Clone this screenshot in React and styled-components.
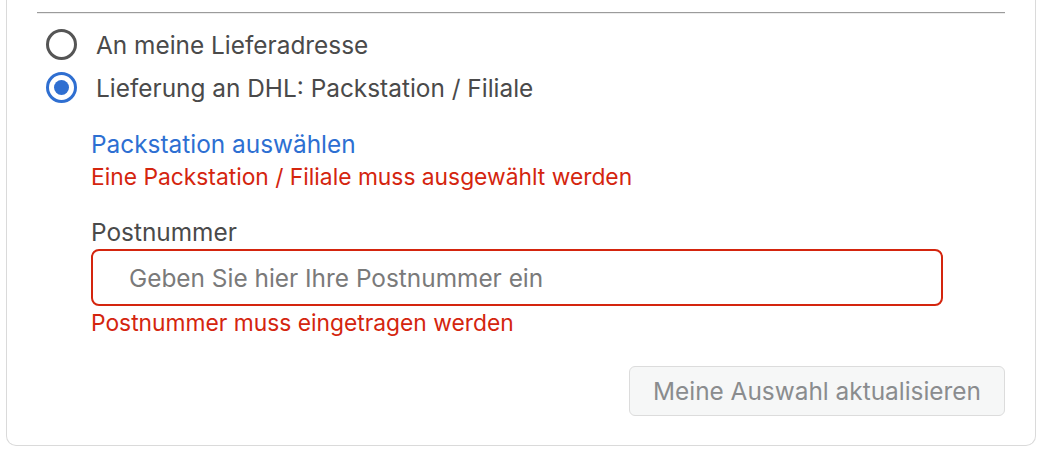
import React, { useState } from "react";
import styled, { createGlobalStyle } from "styled-components";

const Global = createGlobalStyle`
  html, body { margin: 0; padding: 0; background: #ffffff; }
  body { font-family: Inter, "Liberation Sans", Arial, sans-serif; }
  * { box-sizing: border-box; }
`;

const Page = styled.div`
  width: 1048px;
  height: 452px;
  padding: 0 12px 6px 6px;
  overflow: hidden;
`;

const Card = styled.div`
  height: 446px;
  border: 1px solid #dadada;
  border-top: none;
  border-radius: 0 0 10px 10px;
  padding: 12px 30px 0 30px;
  display: flex;
  flex-direction: column;
`;

const Divider = styled.div`
  height: 2px;
  border-top: 1px solid #9b9b9b;
  border-bottom: 1px solid #ececec;
`;

const RadioList = styled.div`
  display: flex;
  flex-direction: column;
  gap: 12px;
  margin-top: 15px;
  padding-left: 9px;
`;

const RadioRow = styled.label`
  display: flex;
  align-items: center;
  gap: 19px;
  height: 31px;
  font-size: 24.4px;
  color: #4a4a4a;
  cursor: pointer;
`;

const RadioCircle = styled.span`
  width: 31px;
  height: 31px;
  border-radius: 50%;
  border: 3px solid ${(p) => (p.$checked ? "#2f6fd1" : "#555555")};
  display: flex;
  align-items: center;
  justify-content: center;
  flex-shrink: 0;
  &::after {
    content: "";
    width: 15px;
    height: 15px;
    border-radius: 50%;
    background: #2f6fd1;
    display: ${(p) => (p.$checked ? "block" : "none")};
  }
`;

const Details = styled.div`
  padding-left: 54px;
  margin-top: 25px;
  display: flex;
  flex-direction: column;
`;

const Link = styled.a`
  font-size: 24.4px;
  color: #2d6fd2;
  text-decoration: none;
  line-height: 32px;
`;

const ErrorText = styled.div`
  font-size: 22.8px;
  color: #d4250e;
  line-height: 34px;
`;

const FieldLabel = styled.div`
  font-size: 24.4px;
  color: #4a4a4a;
  line-height: 32px;
  margin-top: 22px;
`;

const Input = styled.input`
  width: 852px;
  height: 57px;
  margin-top: 1px;
  border: 2px solid #d4250e;
  border-radius: 8px;
  padding: 0 36px;
  font-family: inherit;
  font-size: 24.4px;
  color: #333;
  outline: none;
  &::placeholder { color: #7a7a7a; }
`;

const Actions = styled.div`
  display: flex;
  justify-content: flex-end;
  margin-top: 26px;
`;

const Button = styled.button`
  height: 50px;
  padding: 0 23px;
  border: 1px solid #dcdcdc;
  border-radius: 6px;
  background: #f6f7f7;
  color: #8a8c8e;
  font-family: inherit;
  font-size: 24.4px;
`;

export default function App() {
  const [choice, setChoice] = useState("dhl");
  return (
    <>
      <Global />
      <Page>
        <Card>
          <Divider />
          <RadioList>
            <RadioRow onClick={() => setChoice("home")}>
              <RadioCircle $checked={choice === "home"} />
              An meine Lieferadresse
            </RadioRow>
            <RadioRow onClick={() => setChoice("dhl")}>
              <RadioCircle $checked={choice === "dhl"} />
              Lieferung an DHL: Packstation / Filiale
            </RadioRow>
          </RadioList>
          <Details>
            <Link href="#">Packstation auswählen</Link>
            <ErrorText>Eine Packstation / Filiale muss ausgewählt werden</ErrorText>
            <FieldLabel>Postnummer</FieldLabel>
            <Input placeholder="Geben Sie hier Ihre Postnummer ein" />
            <ErrorText>Postnummer muss eingetragen werden</ErrorText>
          </Details>
          <Actions>
            <Button disabled>Meine Auswahl aktualisieren</Button>
          </Actions>
        </Card>
      </Page>
    </>
  );
}
